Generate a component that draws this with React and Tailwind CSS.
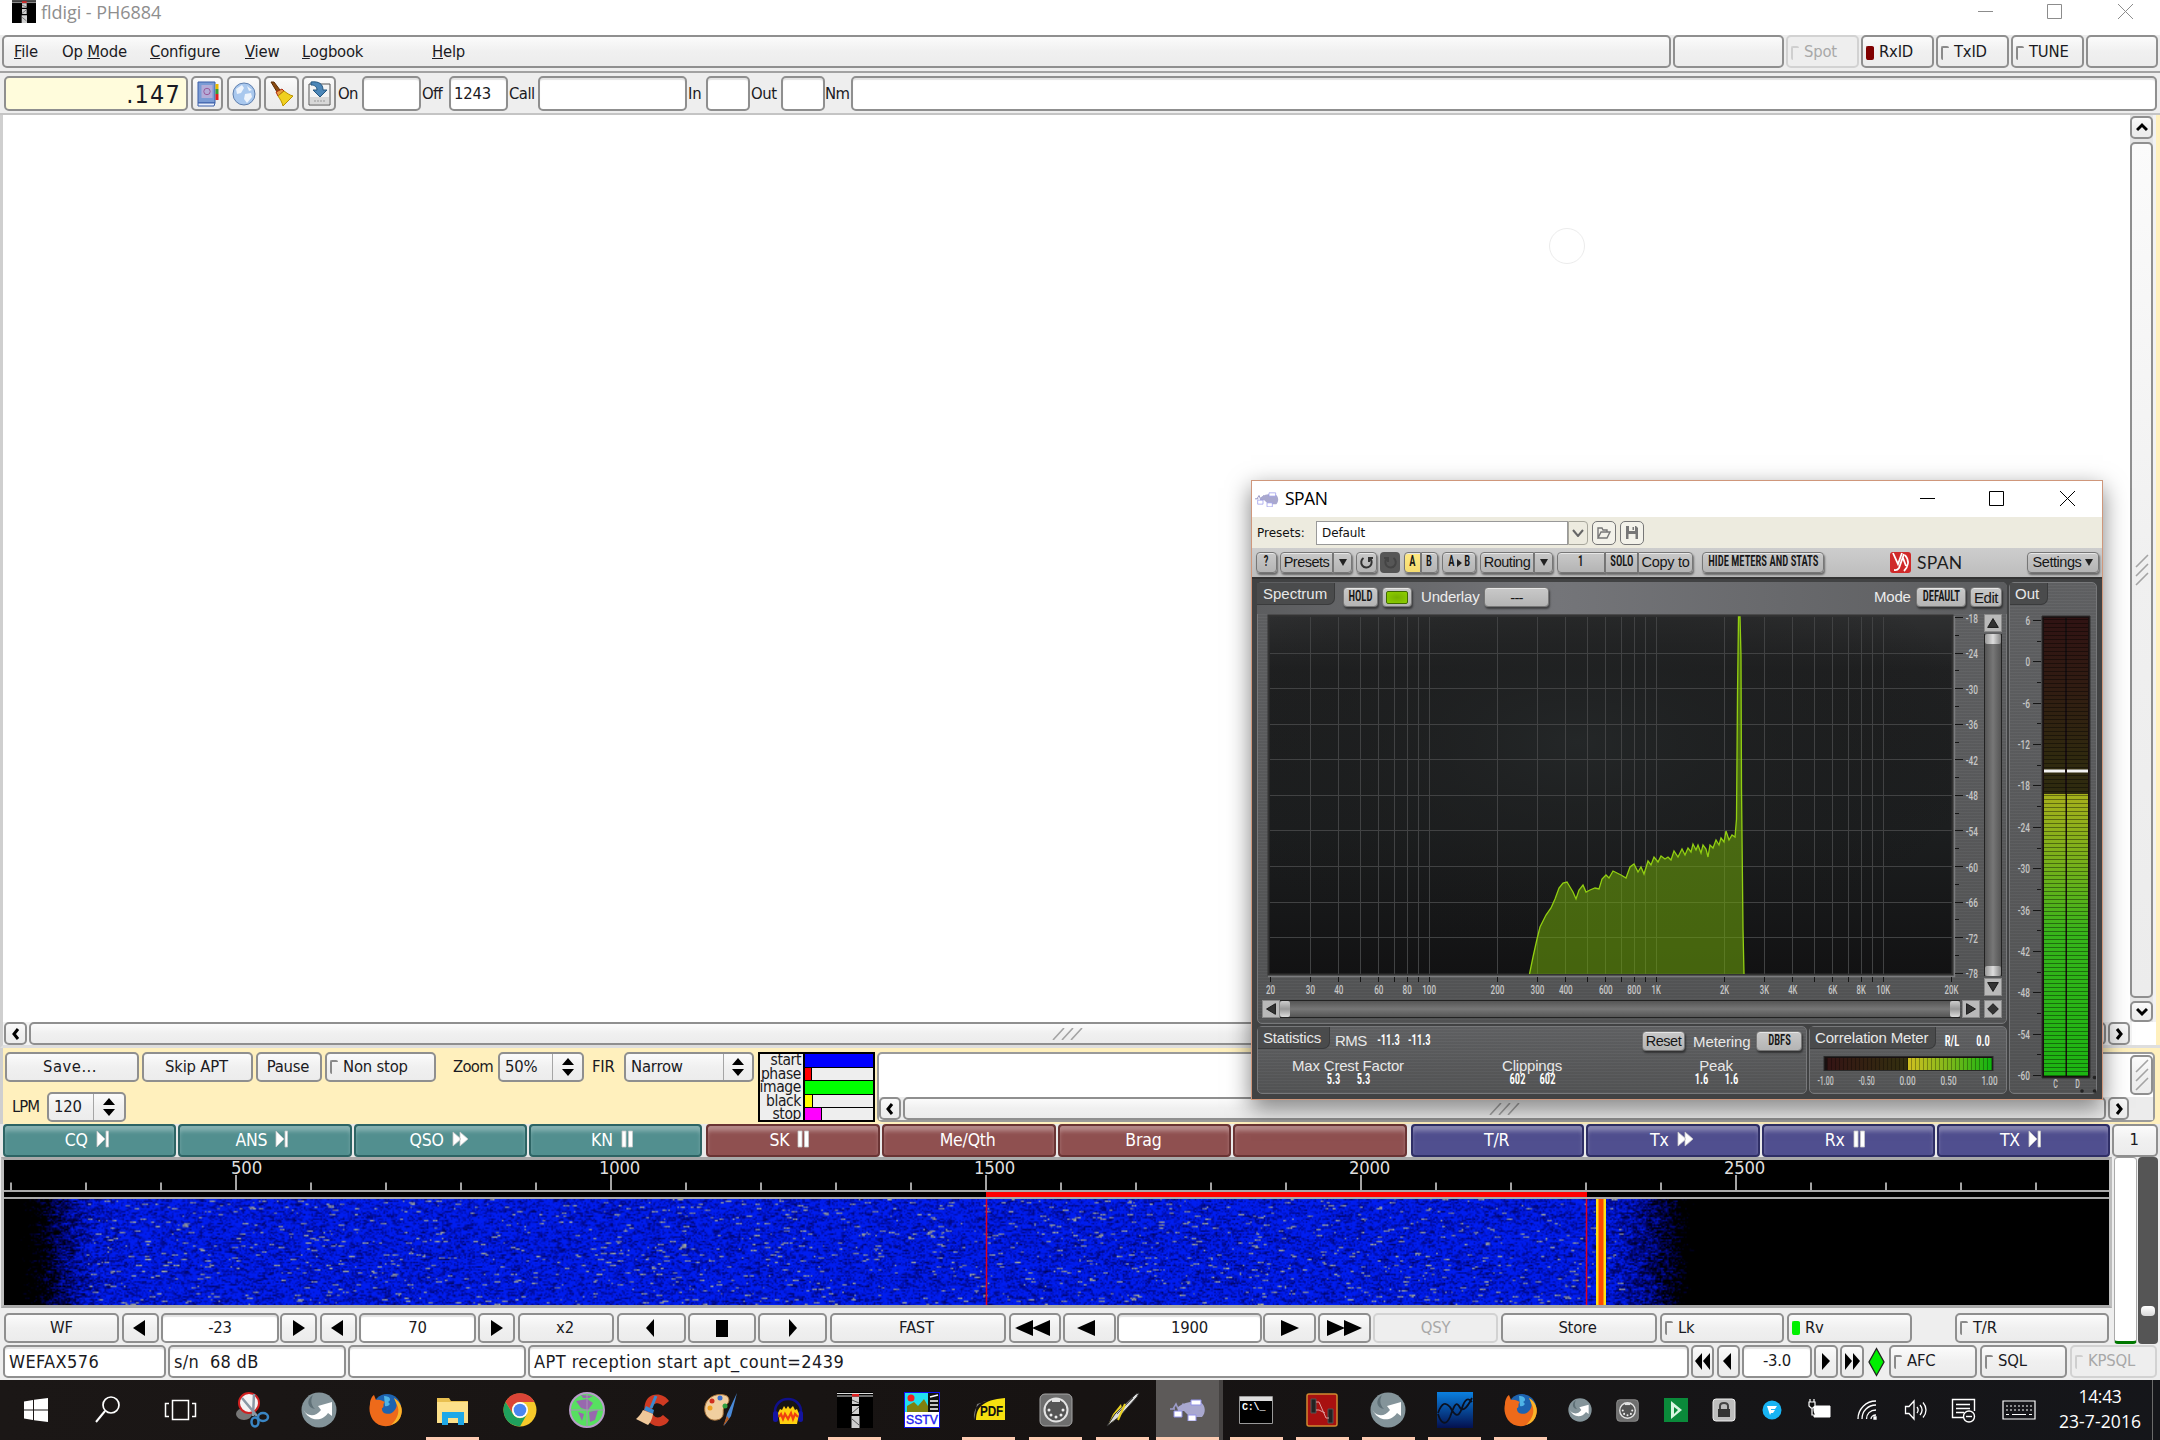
import React, { useEffect, useRef } from "react";

/* ---------- shared widgets ---------- */

const frame = "flex shrink-0 items-center whitespace-nowrap rounded-[5px] border-2 border-[#8f8f8f]";

function Btn({ className = "", children }) {
  return (
    <div className={`${frame} justify-center bg-linear-to-b from-[#fbfbfb] via-[#f0f0f0] to-[#ececec] ${className}`}>
      {children}
    </div>
  );
}

function Field({ className = "", children }) {
  return <div className={`${frame} bg-white shadow-[inset_0_2px_1px_#e4e4e4] ${className}`}>{children}</div>;
}

function Dim({ className = "", children }) {
  return (
    <div className={`flex shrink-0 items-center whitespace-nowrap rounded-[5px] border-2 border-[#d2d2d2] bg-[#eeeeee] text-[#a8a8a8] ${className}`}>
      {children}
    </div>
  );
}

function Mark({ className = "border-[#8a8a8a]" }) {
  return <span className={`mr-[5px] ml-[3px] h-[14px] w-[8px] shrink-0 rounded-[2px] border-t-2 border-l-2 ${className}`} />;
}

function Tri({ d, w = 12, h = 17, className = "" }) {
  return (
    <svg width={w} height={h} viewBox={`0 0 ${w} ${h}`} className={className}>
      <path d={d} fill="#000" />
    </svg>
  );
}
const Left = () => <Tri d="M12 0V16L0 8Z" className="mr-[4px]" />;
const Right = () => <Tri d="M0 0V16L12 8Z" />;
const ThinLeft = () => <Tri w={8} h={18} d="M8 0V18L0 9Z" className="mr-[4px]" />;
const ThinRight = () => <Tri w={8} h={18} d="M0 0V18L8 9Z" />;

function Choice({ className, inner, children }) {
  return (
    <Btn className={`${className} justify-start!`}>
      <span className={`flex h-full items-center border-r border-[#a5a5a5] pl-[5px] ${inner}`}>{children}</span>
      <svg viewBox="0 0 12 18" className="mx-auto h-[18px] w-[12px]">
        <path d="M0 7L6 0L12 7ZM0 11L6 18L12 11Z" fill="#000" />
      </svg>
    </Btn>
  );
}

function Grip({ className = "" }) {
  return (
    <svg width="32" height="12" viewBox="0 0 32 12" className={className}>
      <path d="M1 12L12 0M10 12L21 0M19 12L30 0" stroke="#a4a4a4" strokeWidth="1.6" />
    </svg>
  );
}

function VGrip() {
  return (
    <svg width="14" height="32" viewBox="0 0 14 32">
      <path d="M1 13L13 1M1 22L13 10M1 31L13 19" stroke="#a4a4a4" strokeWidth="1.6" />
    </svg>
  );
}

function Arrow({ dir }) {
  const d = {
    up: "M1 8L6 3L11 8",
    down: "M1 3L6 8L11 3",
    left: "M8 1L4 6L8 11",
    right: "M4 1L8 6L4 11",
  }[dir];
  return (
    <svg width="12" height="12" viewBox="0 0 12 12">
      <path d={d} fill="none" stroke="#000" strokeWidth="3" />
    </svg>
  );
}

/* ---------- main window ---------- */

function TowerIcon({ className }) {
  return (
    <svg viewBox="0 0 36 36" preserveAspectRatio="none" className={className}>
      <path fill="#000" d="M0 0H36V36H0Z" />
      <path stroke="#ddd" strokeWidth="1" d="M0 1.5H36M0 4H36" />
      <path fill="#e02020" d="M15 2H22V4.500H15Z" />
      <path fill="#cfcfcf" d="M15 5H22V12H15ZM15 14H22V22H15ZM14.500 24H22.500V36H14.500Z" />
      <path stroke="#555" d="M15 8L22 11M22 15L15 21M15 27L22 33" />
    </svg>
  );
}

function TitleBar() {
  return (
    <div className="flex h-[35px] items-start bg-white">
      <TowerIcon className="ml-[12px] h-[23px] w-[24px]" />
      <div className="ml-[5px] font-['Open_Sans'] text-[18px] leading-[25px] tracking-[-0.050px] text-[#8e8e8e] [font-stretch:normal]">fldigi - PH6884</div>
      <svg width="155" height="20" viewBox="0 0 155 20" className="mt-[1px] mr-[27px] ml-auto" fill="none" stroke="#8c8c8c">
        <path d="M0 10.500H15M69.500 3.500H83.500V17.500H69.500ZM140 3L155 18M155 3L140 18" />
      </svg>
    </div>
  );
}

function MenuRow() {
  return (
    <div className="flex h-[33px] gap-[2px] bg-[#eeeeee] pl-[2px] *:pt-[2px]">
      <Btn className="w-[1669px] justify-start! pl-[10px]">
        <div className="w-[48px]"><u>F</u>ile</div>
        <div className="w-[88px]">Op <u>M</u>ode</div>
        <div className="w-[95px]"><u>C</u>onfigure</div>
        <div className="w-[57px]"><u>V</u>iew</div>
        <div className="w-[130px]"><u>L</u>ogbook</div>
        <div><u>H</u>elp</div>
      </Btn>
      <Btn className="w-[111px]" />
      <Dim className="w-[73px]"><Mark className="border-[#cfcfcf]" />Spot</Dim>
      <Btn className="w-[73px] justify-start!"><Mark className="border-[#800000] bg-[#800000]" />RxID</Btn>
      <Btn className="w-[73px] justify-start!"><Mark />TxID</Btn>
      <Btn className="w-[73px] justify-start!"><Mark />TUNE</Btn>
      <Btn className="w-[72px]" />
    </div>
  );
}

function LogRow() {
  return (
    <div className="flex h-[35px] items-center bg-[#eeeeee] pl-[4px]">
      <div className={`${frame} h-full w-[184px] justify-end bg-[#fffcdc] pt-[2px] pr-[5px] text-[25px] tracking-[1.200px]`}>.147</div>
      <Btn className="ml-[3px] h-full w-[32px]">
        <svg width="24" height="26" viewBox="0 0 24 26">
          <path d="M3 1H20V22H3Z" fill="#7a9bd4" stroke="#3b5fa8" />
          <path d="M3 22H20L19 25H3Z" fill="#e8eefc" stroke="#3b5fa8" />
          <rect x="6.500" y="4" width="11" height="13" fill="#b3acd8" />
          <circle cx="12" cy="10.500" r="3.200" fill="none" stroke="#9a5a9a" />
          <path d="M20.500 3h3v5h-3z" fill="#e8b800" /><path d="M20.500 8h3v5h-3z" fill="#3aa030" /><path d="M20.500 13h3v6h-3z" fill="#e02020" />
        </svg>
      </Btn>
      <Btn className="ml-[4px] h-full w-[34px]">
        <svg width="24" height="24" viewBox="0 0 24 24">
          <circle cx="12" cy="12" r="11" fill="#a9c8ee" stroke="#5f7fae" />
          <path d="M4 7L10 3L12 6L9 11L5 12ZM13 12L19 11L20 15L15 21L12 17ZM15 4L20 8L17 9Z" fill="#eef4fc" />
        </svg>
      </Btn>
      <Btn className="ml-[3px] h-full w-[35px]">
        <svg width="25" height="26" viewBox="0 0 25 26">
          <path d="M2 1L5 1L11 9L8 11Z" fill="#8a4a10" stroke="#5b2e06" />
          <path d="M7 11L13 8L15 10L9 15Z" fill="#e8a040" stroke="#b02a10" />
          <path d="M9 15L15 10C18 12 20 14 24 15L14 25C13 21 11 18 9 15Z" fill="#f0d020" stroke="#b89000" />
        </svg>
      </Btn>
      <Btn className="mr-[2px] ml-[3px] h-full w-[34px]">
        <svg width="25" height="26" viewBox="0 0 25 26">
          <path d="M2 3H23V24H2Z" fill="#f4f4f4" stroke="#555" />
          <path d="M3 16H22V23H3Z" fill="#d8d8d8" /><path d="M7 20H19" stroke="#999" strokeDasharray="2 1" />
          <path d="M4 1C12 0 16 3 16 9H20L13 16L6 9H10C10 6 8 4 4 4Z" fill="#4b86b8" stroke="#24567f" />
        </svg>
      </Btn>
      <span className="w-[24px] pt-[2px] tracking-[-0.700px]">On</span>
      <Field className="h-full w-[59px]" />
      <span className="w-[28px] pt-[2px] pl-[1px] tracking-[-0.700px]">Off</span>
      <Field className="h-full w-[59px] pt-[2px] pl-[3px]">1243</Field>
      <span className="w-[30px] pt-[2px] pl-[1px] tracking-[-0.500px]">Call</span>
      <Field className="h-full w-[149px]" />
      <span className="w-[19px] pt-[2px] pl-[1px]">In</span>
      <Field className="h-full w-[44px]" />
      <span className="w-[31px] pt-[2px] pl-[1px] tracking-[-0.400px]">Out</span>
      <Field className="h-full w-[44px]" />
      <span className="w-[26px] pt-[2px] tracking-[-0.700px]">Nm</span>
      <Field className="h-full w-[1306px]" />
    </div>
  );
}

function RxArea() {
  return (
    <>
      <div className="flex h-[907px] border-l-[3px] border-[#cfcfcf] bg-white">
        <div className="flex-1" />
        <div className="flex w-[23px] flex-col gap-[3px] bg-[#e6e6e6] pt-px">
          <Btn className="h-[23px]"><Arrow dir="up" /></Btn>
          <Btn className="h-[856px]"><VGrip /></Btn>
          <Btn className="h-[21px]"><Arrow dir="down" /></Btn>
        </div>
        <div className="w-[7px] border-r-4 border-[#fff0bd] bg-[#f2f2f2]" />
      </div>
      <div className="flex h-[26px] items-start gap-[2px] border-b-[3px] border-l-[3px] border-b-[#dedede] border-l-[#cfcfcf] bg-[#f3f3f3] pl-[1px]">
        <Btn className="h-[23px] w-[23px]"><Arrow dir="left" /></Btn>
        <Btn className="h-[23px] w-[2077px]"><Grip /></Btn>
        <Btn className="h-[23px] w-[22px]"><Arrow dir="right" /></Btn>
        <div className="h-full flex-1 border-r-4 border-[#fff0bd] bg-white" />
      </div>
    </>
  );
}

const WEFAX_STATES = [
  ["start", "w-full bg-[#0000ff]"],
  ["phase", "w-[7px] border-r border-black bg-[#ff0000]"],
  ["image", "w-full bg-[#00ff00]"],
  ["black", "w-[8px] border-r border-black bg-[#ffff00]"],
  ["stop", "w-[17px] border-r border-black bg-[#ff00ff]"],
];

function WefaxPanel() {
  return (
    <div className="flex h-[76px] border-l-[3px] border-[#cfcfcf] bg-[#fff0bd] pt-[4px] pr-[5px]">
      <div className="flex w-[755px] flex-col gap-[10px] pl-[2px]">
        <div className="flex h-[30px] items-center">
          <Btn className="h-full w-[134px] pr-[4px] tracking-[0.500px]">Save...</Btn>
          <Btn className="ml-[3px] h-full w-[111px] pr-[2px]">Skip APT</Btn>
          <Btn className="ml-[3px] h-full w-[66px] pr-[2px] tracking-[-0.200px]">Pause</Btn>
          <Btn className="ml-[3px] h-full w-[111px] justify-start!"><Mark />Non stop</Btn>
          <span className="ml-[17px] w-[45px] tracking-[-0.700px]">Zoom</span>
          <Choice className="h-full w-[86px]" inner="w-[53px]">50%</Choice>
          <span className="ml-[8px] w-[32px]">FIR</span>
          <Choice className="h-full w-[130px]" inner="w-[98px]">Narrow</Choice>
        </div>
        <div className="flex h-[30px] items-center pl-[7px]">
          <span className="w-[35px] tracking-[-1px]">LPM</span>
          <Choice className="h-full w-[79px]" inner="w-[45px]">120</Choice>
        </div>
      </div>
      <div className="flex h-[70px] w-[117px] flex-col overflow-hidden border-2 border-black bg-[#eeeeee]">
        {WEFAX_STATES.map(([name, bar]) => (
          <div key={name} className="flex h-[13.500px] shrink-0">
            <div className="flex h-full w-[43px] items-center justify-end pr-[2px] text-[15.500px] leading-[13px] tracking-[-0.400px]">{name}</div>
            <div className="h-full flex-1 border-b border-l-2 border-black"><div className={`h-full ${bar}`} /></div>
          </div>
        ))}
      </div>
      <div className="ml-[2px] flex h-[70px] flex-1 flex-col justify-between rounded-[5px] border-2 border-[#9a9a9a] bg-white">
        <div className="flex h-[43px] justify-end">
          <Btn className="mt-px h-[40px] w-[23px]"><VGrip /></Btn>
        </div>
        <div className="flex h-[23px] gap-[2px] bg-[#ececec]">
          <Btn className="w-[22px]"><Arrow dir="left" /></Btn>
          <Btn className="w-[1203px]"><Grip /></Btn>
          <Btn className="w-[21px]"><Arrow dir="right" /></Btn>
        </div>
      </div>
    </div>
  );
}

const SYM = {
  next: "M1 1L9 9L1 17ZM10 1H12.500V17H10Z",
  ff: "M1 2L9 9L1 16ZM8 2L16 9L8 16Z",
  pause: "M1 1H5V17H1ZM7.500 1H11.500V17H7.500Z",
};
const TEAL = "border-[#2d6464] bg-[#528f8f] shadow-[inset_0_6px_4px_-1px_#86b1b1]";
const ROSE = "border-[#6a3434] bg-[#8f5050] shadow-[inset_0_6px_4px_-1px_#b58888]";
const BLUE = "border-[#2f2f66] bg-[#504f8f] shadow-[inset_0_6px_4px_-1px_#8786b3]";
const MACROS = [
  ["w-[699px]", TEAL, [["CQ", "next"], ["ANS", "next"], ["QSO", "ff"], ["KN", "pause"]]],
  ["w-[701px]", ROSE, [["SK", "pause"], ["Me/Qth"], ["Brag"], [""]]],
  ["w-[699px]", BLUE, [["T/R"], ["Tx", "ff"], ["Rx", "pause"], ["TX", "next"]]],
];

function MacroBar() {
  return (
    <div className="flex h-[33px] gap-[4px] bg-[#e9e9e9] pl-[3px]">
      {MACROS.map(([width, tone, items], g) => (
        <div key={g} className={`grid grid-cols-4 gap-[2px] ${width}`}>
          {items.map(([label, sym], i) => (
            <div key={i} className={`flex items-center justify-center gap-[8px] rounded-[4px] border-2 pr-[2px] text-[17.500px] text-white ${tone}`}>
              {label}
              {sym && (
                <svg width="17" height="18" viewBox="0 0 17 18" className="-mt-[4px]">
                  <path d={SYM[sym]} fill="#fff" stroke="#c8c8c8" strokeWidth="0.800" />
                </svg>
              )}
            </div>
          ))}
        </div>
      ))}
      <Btn className="-ml-[2px] w-[46px] pr-[2px]">1</Btn>
    </div>
  );
}

function Waterfall() {
  const ref = useRef(null);
  useEffect(() => {
    const c = ref.current;
    const W = c.width;
    const H = c.height;
    const ctx = c.getContext("2d");
    const img = ctx.createImageData(W, H);
    let seed = 20160723;
    const rnd = () => {
      seed = (Math.imul(seed, 1664525) + 1013904223) >>> 0;
      return seed / 4294967296;
    };
    const stops = [[0, -0.75], [14, -0.3], [24, -0.05], [38, 0.4], [56, 0.78], [80, 0.92], [1060, 0.92], [1080, 0.72], [1100, 0.42], [1112, 0.1], [1130, -0.5], [1405, -5]];
    const level = (x) => {
      for (let i = 1; i < stops.length; i++) {
        if (x <= stops[i][0]) {
          const [x0, a] = stops[i - 1];
          const [x1, b] = stops[i];
          return a + ((b - a) * (x - x0)) / (x1 - x0);
        }
      }
      return -5;
    };
    for (let y = 0; y < H; y++) {
      let prev = rnd();
      let speck = 0;
      for (let x = 0; x < W; x++) {
        const n = rnd();
        const mix = n * 0.6 + prev * 0.4;
        prev = mix;
        const base = level(x);
        let L = base + (mix - 0.5) * 1.15;
        if (speck > 0) speck--;
        else if (base > 0.74 && rnd() < 0.018) speck = 1 + Math.floor(rnd() * 4);
        L = Math.max(0, Math.min(1, L));
        const p = (y * W + x) * 4;
        if (speck > 0) {
          const s = 80 + rnd() * 80;
          img.data[p] = s;
          img.data[p + 1] = s + 8;
          img.data[p + 2] = 160;
        } else {
          img.data[p] = 0;
          img.data[p + 1] = L * L * 30;
          img.data[p + 2] = L * 240;
        }
        img.data[p + 3] = 255;
      }
    }
    ctx.putImageData(img, 0, 0);
  }, []);
  return <canvas ref={ref} width={1405} height={71} className="block h-[106px] w-[2107px] max-w-none" />;
}

function WaterfallScale() {
  const ticks = [];
  for (let hz = 200; hz <= 3000; hz += 100) ticks.push(hz);
  return (
    <svg width="2107" height="30" viewBox="4 1160 2107 30" className="block max-w-none bg-black">
      {ticks.map((hz) => {
        const x = 236 + (hz - 500) * 0.75;
        const major = hz % 500 === 0;
        return (
          <g key={hz}>
            <path d={`M${x} ${major ? 1175 : 1182.5}V1190`} stroke="#dcdcdc" strokeWidth="1.500" />
            {major && hz < 3000 && (
              <text x={x - (hz < 1000 ? 5 : 12)} y="1174" fill="#dedede" fontSize="17" textLength={hz < 1000 ? 31 : 41} lengthAdjust="spacingAndGlyphs">{hz}</text>
            )}
          </g>
        );
      })}
    </svg>
  );
}

function WaterfallBlock() {
  return (
    <div className="flex h-[187px] bg-[#eeeeee]">
      <div className="w-[2112px]">
        <div className="ml-px h-[151px] w-[2111px] overflow-hidden border-x-[3px] border-t-[3px] border-b-[3px] border-x-[#bdbdbd] border-y-[#a9a9a9]">
          <WaterfallScale />
          <div className="flex h-[9px] border-y-2 border-[#a9a9a9] bg-black pl-[982px]">
            <div className="w-[601px] bg-[#ff0000]" />
          </div>
          <div className="relative w-[2107px]">
            <Waterfall />
            <svg className="absolute inset-0 h-[106px] w-[2107px]" viewBox="4 0 2107 106">
              <path d="M986.500 0V106M1586.500 0V106" stroke="#e00020" strokeWidth="1.500" />
              <path d="M1596 0H1606V106H1596Z" fill="#ffe010" />
              <path d="M1598.500 0H1603.500V106H1598.500Z" fill="#ff4a00" />
            </svg>
          </div>
        </div>
        <div className="flex h-[36px] items-start pt-[5px] pl-[4px] *:h-[30px]">
          <Btn className="w-[115px]">WF</Btn>
          <Btn className="ml-[3px] w-[37px]"><Left /></Btn>
          <Field className="ml-[2px] w-[118px] justify-center">-23</Field>
          <Btn className="ml-[1px] w-[37px]"><Right /></Btn>
          <Btn className="ml-[3px] w-[37px]"><Left /></Btn>
          <Field className="ml-[2px] w-[117px] justify-center">70</Field>
          <Btn className="ml-[2px] w-[37px]"><Right /></Btn>
          <Btn className="ml-[3px] w-[96px] pr-[2px]">x2</Btn>
          <Btn className="ml-[3px] w-[69px]"><ThinLeft /></Btn>
          <Btn className="ml-[2px] w-[68px]"><Tri d="M0 0H12V17H0Z" /></Btn>
          <Btn className="ml-[2px] w-[69px]"><ThinRight /></Btn>
          <Btn className="ml-[3px] w-[176px] pr-[3px]">FAST</Btn>
          <Btn className="ml-[3px] w-[52px] pr-[6px]"><Tri w={35} d="M18 0V16L0 8ZM35 0V16L17 8Z" /></Btn>
          <Btn className="ml-[2px] w-[53px] pr-[8px]"><Tri w={18} d="M18 0V16L0 8Z" /></Btn>
          <Field className="ml-[1px] w-[145px] justify-center">1900</Field>
          <Btn className="ml-[1px] w-[53px]"><Tri w={18} d="M0 0V16L18 8Z" /></Btn>
          <Btn className="ml-[2px] w-[53px]"><Tri w={35} d="M0 0V16L18 8ZM17 0V16L35 8Z" /></Btn>
          <Dim className="ml-[2px] w-[125px] justify-center">QSY</Dim>
          <Btn className="ml-[3px] w-[156px] pr-[3px]">Store</Btn>
          <Btn className="ml-[3px] w-[124px] justify-start!"><Mark />Lk</Btn>
          <Btn className="ml-[3px] w-[125px] justify-start!"><Mark className="border-[#00f000] bg-[#00f000]" />Rv</Btn>
          <Btn className="ml-[43px] w-[154px] justify-start!"><Mark />T/R</Btn>
        </div>
      </div>
      <div className="ml-[2px] w-[23px] rounded-[4px] border border-x-[#aaa] border-t-[#999] border-b-[3px] border-b-[#007800] bg-white" />
      <div className="ml-[1px] flex w-[20px] flex-col rounded-[4px] bg-[#555] px-[3px] pt-[149px]">
        <div className="h-[10px] rounded-[4px] bg-linear-to-b from-white to-[#d8d8d8]" />
      </div>
    </div>
  );
}

function StatusRow() {
  return (
    <div className="flex h-[36px] items-start bg-[#eeeeee] pt-px pb-[2px] pl-[3px] *:h-[33px]">
      <Field className="w-[163px] pl-[4px] text-[18px] tracking-[0.400px]">WEFAX576</Field>
      <Field className="ml-[2px] w-[178px] pl-[4px] text-[18px] tracking-[0.300px] whitespace-pre">{"s/n  68 dB"}</Field>
      <Field className="ml-[2px] w-[178px]" />
      <Field className="ml-[2px] w-[1161px] pl-[4px] text-[18px] tracking-[0.440px]">APT reception start apt_count=2439</Field>
      <Btn className="ml-[2px] w-[23px]"><Tri w={15} d="M7 0V17L0 8ZM15 0V17L8 8Z" /></Btn>
      <Btn className="ml-[3px] w-[23px] pr-[3px]"><Tri w={8} d="M8 0V17L0 8Z" /></Btn>
      <Field className="ml-[2px] w-[70px] justify-center">-3.0</Field>
      <Btn className="ml-[2px] w-[24px]"><Tri w={8} d="M0 0V17L8 8Z" /></Btn>
      <Btn className="ml-[2px] w-[24px]"><Tri w={15} d="M0 0V17L7 8ZM8 0V17L15 8Z" /></Btn>
      <svg viewBox="0 0 17 33" className="ml-[4px] w-[17px]">
        <path d="M8.500 3.500L16 17L8.500 30.500L1 17Z" fill="#00ef00" stroke="#222" strokeWidth="1.300" />
      </svg>
      <Btn className="ml-[4px] w-[88px] justify-start!"><Mark />AFC</Btn>
      <Btn className="ml-[3px] w-[87px] justify-start!"><Mark />SQL</Btn>
      <Dim className="ml-[3px] w-[87px]"><Mark className="border-[#cfcfcf]" />KPSQL</Dim>
    </div>
  );
}

/* ---------- SPAN plugin window ---------- */

const plug = "flex shrink-0 items-center justify-center whitespace-nowrap rounded-[4px] border border-[#777] bg-linear-to-b from-[#c9c9c9] to-[#b4b4b4] text-[#161616] shadow-[1px_2px_2px_rgba(0,0,0,0.45),inset_0_1px_0_#e6e6e6]";
const Plug = ({ className = "", children }) => <div className={`${plug} ${className}`}>{children}</div>;
const Nar = ({ className = "", children }) => (
  <span className={`inline-block scale-x-[.73] font-['Roboto'] text-[14.500px] leading-none font-semibold whitespace-nowrap [font-stretch:condensed] ${className}`}>{children}</span>
);
const Caret = () => <svg width="8" height="7" viewBox="0 0 8 7"><path d="M0 0H8L4 7Z" fill="#222" /></svg>;

const panel = "rounded-[5px] border border-[#77787a] bg-[repeating-linear-gradient(0deg,rgba(255,255,255,0.02)_0_1px,rgba(0,0,0,0.04)_1px_3px),linear-gradient(180deg,#626365,#545556)]";
const tab = "flex h-[22px] shrink-0 items-center rounded-br-[7px] border-r border-b border-[#3a3b3c] bg-[#4a4b4c] text-[15px] text-[#e8e8e8]";

function SpanIcon({ className }) {
  return (
    <svg viewBox="0 0 36 22" className={className}>
      <path d="M0 10H5M3 10L6 5L9 12L13 5L17 10" stroke="#9a9ac8" strokeWidth="1.500" fill="none" />
      <path d="M8 8C14 3 22 2 30 3C36 6 36 14 32 18H20L14 12H8Z" fill="#a9a8cf" />
      <path d="M21 1H31V6H21ZM4 12H12V18H4ZM18 16H26V22H18Z" fill="#fff" stroke="#9090e8" />
    </svg>
  );
}

const DB = [-18, -24, -30, -36, -42, -48, -54, -60, -66, -72, -78];
const HZ = [20, 30, 40, 50, 60, 70, 80, 90, 100, 200, 300, 400, 500, 600, 700, 800, 900, 1000, 2000, 3000, 4000, 5000, 6000, 7000, 8000, 9000, 10000, 20000];
const HZ_LABEL = /^(20|30|40|60|80|100|200|300|400|600|800|1000|2000|3000|4000|6000|8000|10000|20000)$/;
const hx = (f) => 1270.5 + 227 * Math.log10(f / 20);
const dy = (d) => 618.5 + (-18 - d) * 5.93;

function AxisText({ x, y, s, anchor = "middle", fill = "#c6c6c6", k = 4.6 }) {
  return (
    <text x={x} y={y} fill={fill} fontSize="12.500" fontWeight="500" fontFamily="Roboto" textAnchor={anchor} textLength={String(s).replace(/[.-]/g, "").length * k + (/[.-]/.test(s) ? 3 : 0)} lengthAdjust="spacingAndGlyphs">
      {s}
    </text>
  );
}

const CURVE =
  "M1529.500 975L1533 958L1537 940L1540 928L1546 916L1551 909L1555 900L1559 889L1563 884L1567 883L1570 888L1573 893L1576 900L1579 891L1583 886L1586 893L1590 891L1595 889L1599 890L1602 880L1606 876L1609 879L1613 872L1617 874L1621 876L1626 879L1630 868L1634 865L1638 873L1641 868L1644 875L1648 862L1651 866L1654 858L1658 863L1661 857L1665 860L1668 858L1671 861L1674 852L1678 858L1682 850L1685 856L1688 849L1691 853L1693 845L1696 851L1698 846L1701 854L1703 846L1706 850L1708 858L1710 846L1713 849L1716 841L1719 846L1721 839L1724 843L1726 832L1729 841L1732 836L1735 838L1736.500 820L1737.500 695L1738.500 618L1740 618L1741 657L1741.500 790L1743 930L1744 975";

function Spectrum() {
  return (
    <svg width="725" height="384" viewBox="1257 615 725 384" className="block overflow-visible">
      <defs>
        <linearGradient id="plotbg" x1="0" x2="0" y1="0" y2="1">
          <stop offset="0" stopColor="#2f3031" /><stop offset="0.150" stopColor="#202122" /><stop offset="0.600" stopColor="#1c1e1f" /><stop offset="1" stopColor="#121213" />
        </linearGradient>
        <radialGradient id="plotglow" cx="0.450" cy="0.350" r="0.600">
          <stop offset="0" stopColor="#242728" /><stop offset="1" stopColor="#161616" stopOpacity="0" />
        </radialGradient>
      </defs>
      <path d="M1268.500 616.500H1952.500V975.500H1268.500Z" fill="url(#plotbg)" stroke="#333" strokeWidth="2" />
      <path d="M1270 618H1952V975H1270Z" fill="url(#plotglow)" />
      <path d="M1268 977.500H1954.500V617" fill="none" stroke="#7b7c7e" strokeWidth="1.500" />
      {HZ.slice(1, -1).map((f) => <path key={f} d={`M${Math.floor(hx(f)) + 0.5} 618V975`} stroke="#414243" />)}
      {DB.slice(1, -1).map((d) => <path key={d} d={`M1270 ${Math.floor(dy(d)) + 0.5}H1952`} stroke="#414243" />)}
      <path d={CURVE + "Z"} fill="#6fa80a" fillOpacity="0.550" />
      <path d={CURVE} fill="none" stroke="#92cf12" strokeWidth="1.300" />
      {HZ.map((f) => (
        <g key={f}>
          <path d={`M${Math.floor(hx(f)) + 0.5} 978V983`} stroke="#161616" />
          {HZ_LABEL.test(String(f)) && <AxisText x={hx(f)} y={995} s={f >= 1000 ? f / 1000 + "K" : f} />}
        </g>
      ))}
      {DB.map((d) => (
        <g key={d}>
          <path d={`M1955 ${Math.floor(dy(d)) + 0.5}H1963`} stroke="#161616" />
          {d > -78 && <path d={`M1955 ${Math.floor(dy(d - 3)) + 0.5}H1959`} stroke="#161616" />}
          <AxisText x={1978} y={dy(d) + 5} s={d} anchor="end" />
        </g>
      ))}
    </svg>
  );
}

function ScrollBtn({ d }) {
  return (
    <svg width="18" height="18" viewBox="0 0 18 18" className="shrink-0 border border-[#8a8a8a] bg-[#b9b9b9]">
      <path d={d} fill="#333" stroke="#111" />
    </svg>
  );
}

function OutMeter() {
  const my = (d) => 620 + (6 - d) * 6.894;
  const marks = [];
  for (let d = 6; d >= -60; d -= 3) marks.push(d);
  return (
    <svg width="86" height="488" viewBox="2010 605 86 488" className="block">
      <defs>
        <linearGradient id="off" x1="0" x2="0" y1="0" y2="1">
          <stop offset="0" stopColor="#301313" /><stop offset="0.150" stopColor="#311c12" /><stop offset="0.300" stopColor="#30290f" /><stop offset="0.600" stopColor="#2c300f" /><stop offset="1" stopColor="#2c300f" />
        </linearGradient>
        <linearGradient id="on" x1="0" x2="0" y1="0" y2="1">
          <stop offset="0" stopColor="#a6b01c" /><stop offset="0.250" stopColor="#76b01a" /><stop offset="0.500" stopColor="#36b41a" /><stop offset="1" stopColor="#1cb412" />
        </linearGradient>
        <pattern id="rows" width="46" height="4" patternUnits="userSpaceOnUse"><path d="M0 3.500H46" stroke="#000" strokeOpacity="0.400" /></pattern>
      </defs>
      <path d="M2042 616H2090V1078H2042Z" fill="#1a1010" stroke="#2e2e2e" />
      <path d="M2044 618H2065V1076H2044ZM2067 618H2088V1076H2067Z" fill="url(#off)" />
      <path d="M2044 794H2065.500V1076H2044ZM2067 794H2088V1076H2067Z" fill="url(#on)" />
      <path d="M2044 618H2088V1076H2044Z" fill="url(#rows)" />
      <path d="M2044 769.500H2065V772.500H2044ZM2067 769.500H2088V772.500H2067Z" fill="#f2f2f2" />
      {marks.map((d) => (
        <g key={d}>
          <path d={`M${d % 6 === 0 ? 2033 : 2037} ${Math.round(my(d)) + 0.5}H2041`} stroke="#161616" />
          {d % 6 === 0 && <AxisText x={2030} y={my(d) + 5} s={d} anchor="end" />}
        </g>
      ))}
      <AxisText x={2055.5} y={1088} s="C" /><AxisText x={2077.5} y={1088} s="D" />
      <circle cx="2094.500" cy="1077.500" r="1.800" fill="#222" /><circle cx="2082" cy="1091" r="1.800" fill="#222" /><circle cx="2094.500" cy="1091" r="1.800" fill="#222" />
    </svg>
  );
}

function SpanWindow() {
  return (
    <div className="absolute top-[480px] left-[1251px] flex h-[620px] w-[852px] flex-col border border-[#cf977b] bg-white font-['Liberation_Sans'] tracking-normal shadow-[0_8px_22px_rgba(0,0,0,0.5)] [font-stretch:normal]">
      <div className="flex h-[36px] shrink-0 items-center">
        <SpanIcon className="ml-[3px] h-[15px] w-[24px]" />
        <div className="ml-[6px] font-['Open_Sans'] text-[17.500px] tracking-[-0.500px] text-black">SPAN</div>
        <svg width="155" height="16" viewBox="0 0 155 16" className="mr-[27px] ml-auto" fill="none" stroke="#000">
          <path d="M0 7.500H15M69.500 0.500H83.500V14.500H69.500ZM140 0L155 15M155 0L140 15" />
        </svg>
      </div>
      <div className="flex h-[31px] shrink-0 items-center bg-[#edebdf] pl-[5px] font-['DejaVu_Sans'] text-[12px] text-[#111]">
        <span className="w-[59px]">Presets:</span>
        <div className="flex h-[24px] w-[252px] items-center border border-[#999] bg-white pl-[5px] tracking-[-0.100px]">Default</div>
        <div className="flex h-[24px] w-[20px] items-center justify-center rounded-r-[4px] border border-[#a8a79c] bg-[#edebdf]">
          <svg width="12" height="8" viewBox="0 0 12 8"><path d="M1 1L6 7L11 1" fill="none" stroke="#666" strokeWidth="2" /></svg>
        </div>
        <div className="ml-[4px] flex size-[24px] items-center justify-center rounded-[5px] border border-[#777] bg-[#f3f2ea]">
          <svg width="14" height="12" viewBox="0 0 14 12"><path d="M1 11V1H5L6 3H10V5M1 11L4 5H13L10 11Z" fill="none" stroke="#777" strokeWidth="1.400" /></svg>
        </div>
        <div className="ml-[4px] flex size-[24px] items-center justify-center rounded-[5px] border border-[#777] bg-[#f3f2ea]">
          <svg width="14" height="13" viewBox="0 0 14 13"><path d="M1 0H11L13 2V13H1Z" fill="#777" /><path d="M4 0H10V5H4ZM3.500 8H10.500V13H3.500Z" fill="#f3f2ea" /><path d="M7.500 1H9V4H7.500Z" fill="#777" /></svg>
        </div>
      </div>
      <div className="flex h-[29px] shrink-0 items-center bg-linear-to-b from-[#cdcdcd] to-[#bdbdbd] pl-[4px] text-[14.500px] *:h-[21px]">
        <Plug className="w-[21px]"><Nar className="scale-x-90">?</Nar></Plug>
        <Plug className="ml-[3px] w-[53px] rounded-r-none tracking-[-0.500px]">Presets</Plug>
        <Plug className="w-[19px] rounded-l-none"><Caret /></Plug>
        <Plug className="ml-[4px] w-[21px]">
          <svg width="15" height="14" viewBox="0 0 15 14"><path d="M4.500 2A5.200 5.200 0 1 0 11 2.500M10 6V2H14" fill="none" stroke="#333" strokeWidth="2" /></svg>
        </Plug>
        <div className="ml-[3px] flex w-[20px] items-center justify-center rounded-[4px] bg-[#565656]">
          <svg width="15" height="14" viewBox="0 0 15 14"><path d="M10.500 2A5.200 5.200 0 1 1 4 2.500M5 6V2H1" fill="none" stroke="#444" strokeWidth="2" /></svg>
        </div>
        <Plug className="ml-[4px] w-[17px] rounded-r-none from-[#ffe984]! to-[#f5dc70]!"><Nar>A</Nar></Plug>
        <Plug className="w-[17px] rounded-l-none"><Nar>B</Nar></Plug>
        <Plug className="ml-[4px] w-[34px] gap-[1px]">
          <Nar className="w-[9px]">A</Nar><svg width="5" height="8" viewBox="0 0 5 8"><path d="M0 0L5 4L0 8Z" fill="#222" /></svg><Nar className="w-[9px]">B</Nar>
        </Plug>
        <Plug className="ml-[4px] w-[54px] rounded-r-none tracking-[-0.500px]">Routing</Plug>
        <Plug className="w-[19px] rounded-l-none"><Caret /></Plug>
        <Plug className="ml-[4px] w-[48px] rounded-r-none"><Nar className="scale-x-90">1</Nar></Plug>
        <Plug className="w-[33px] rounded-none"><Nar>SOLO</Nar></Plug>
        <Plug className="w-[55px] rounded-l-none tracking-[-0.300px]">Copy to</Plug>
        <Plug className="ml-[9px] w-[122px]"><Nar>HIDE METERS AND STATS</Nar></Plug>
        <svg viewBox="0 0 21 21" className="ml-[66px] w-[21px]">
          <rect width="21" height="21" rx="3" fill="#d02a2a" />
          <path d="M3 1L8 12L12 1M14 2L9 16C7 19 5 18 4 18M13 6L16 14M15 3C20 9 18 15 14 19" fill="none" stroke="#fff" strokeWidth="1.800" />
        </svg>
        <span className="ml-[6px] flex w-[110px] items-center font-['Lato'] text-[17.500px] tracking-[0.300px] text-[#1d1d1d]">SPAN</span>
        <Plug className="w-[72px] gap-[4px] tracking-[-0.450px]">Settings <Caret /></Plug>
      </div>

      <div className="flex flex-1 gap-[2px] border-t-2 border-[#333] bg-[#414243] pt-[3px] pl-[5px]">
        <div className="flex w-[750px] flex-col gap-[2px]">
          <div className={`${panel} flex h-[442px] flex-col`}>
            <div className="-m-px mb-0 flex h-[32px] shrink-0 items-start rounded-t-[5px] bg-linear-to-r from-[#5c5d5f] via-[#747579] via-40% to-[#5c5d5f] pt-px text-[15px] text-[#ececec]">
              <div className={`${tab} w-[78px] pl-[6px]`}>Spectrum</div>
              <Plug className="mt-[4px] ml-[8px] h-[20px] w-[35px]"><Nar>HOLD</Nar></Plug>
              <Plug className="mt-[4px] ml-[4px] h-[20px] w-[30px]"><span className="h-[13px] w-[22px] rounded-[2px] border border-[#3f6a00] bg-[radial-gradient(#76b000,#8ed000)]" /></Plug>
              <span className="mt-[5px] ml-[9px] w-[63px] leading-[18px] tracking-[-0.200px]">Underlay</span>
              <Plug className="mt-[4px] h-[20px] w-[65px] tracking-[-0.800px]">---</Plug>
              <span className="mt-[5px] ml-[325px] w-[42px] leading-[18px] tracking-[-0.200px]">Mode</span>
              <Plug className="mt-[4px] h-[20px] w-[50px]"><Nar>DEFAULT</Nar></Plug>
              <Plug className="mt-[4px] ml-[4px] h-[20px] w-[32px] tracking-[-0.500px]">Edit</Plug>
            </div>
            <div className="-ml-px flex">
              <Spectrum />
              <div className="ml-[2px] flex w-[18px] flex-col">
                <ScrollBtn d="M3 14L9 4L15 14Z" />
                <div className="my-[2px] flex h-[342px] flex-col justify-between border-x border-[#222] bg-linear-to-r from-[#555] via-[#777] to-[#555]">
                  <div className="h-[10px] rounded-[2px] bg-linear-to-r from-[#999] via-[#ddd] to-[#888]" />
                  <div className="h-[10px] rounded-[2px] bg-linear-to-r from-[#999] via-[#ddd] to-[#888]" />
                </div>
                <ScrollBtn d="M3 4L9 14L15 4Z" />
              </div>
            </div>
            <div className="mt-[2px] ml-[4px] flex">
              <ScrollBtn d="M14 3L4 9L14 15Z" />
              <div className="mr-[2px] flex h-[18px] w-[680px] justify-between border-y border-[#222] bg-linear-to-b from-[#555] via-[#777] to-[#555]">
                <div className="w-[10px] rounded-[2px] bg-linear-to-b from-[#ccc] via-[#999] to-[#ddd]" />
                <div className="w-[10px] rounded-[2px] bg-linear-to-b from-[#ccc] via-[#999] to-[#ddd]" />
              </div>
              <ScrollBtn d="M4 3L14 9L4 15Z" />
              <div className="w-[4px]" />
              <ScrollBtn d="M9 3L15 9L9 15L3 9Z" />
            </div>
          </div>

          <div className="flex h-[68px] gap-[2px] text-[15px] text-[#e8e8e8]">
            <div className={`${panel} w-[550px]`}>
              <div className="flex h-[30px]">
                <div className={`${tab} w-[72px] pl-[5px] tracking-[-0.200px]`}>Statistics</div>
                <span className="mt-[5px] ml-[5px] w-[36px] leading-[18px] tracking-[-0.500px]">RMS</span>
                <Nar className="mt-[7px] ml-[2px] w-[31px] text-center text-white">-11.3</Nar>
                <Nar className="mt-[7px] w-[30px] text-center text-white">-11.3</Nar>
                <Plug className="mt-[4px] ml-[208px] h-[20px] w-[43px] text-[14.500px] tracking-[-0.500px]">Reset</Plug>
                <span className="mt-[6px] ml-[8px] w-[63px] leading-[18px] tracking-[-0.100px]">Metering</span>
                <Plug className="mt-[4px] h-[20px] w-[46px]"><Nar>DBFS</Nar></Plug>
              </div>
              <div className="flex leading-[16px]">
                {[
                  ["Max Crest Factor", "5.3", "ml-[25px] w-[130px]"],
                  ["Clippings", "602", "ml-[54px] w-[130px]"],
                  ["Peak", "1.6", "ml-[54px] w-[130px]"],
                ].map(([t, v, c]) => (
                  <div key={t} className={`flex flex-col items-center ${c}`}>
                    <span className="leading-[17px] tracking-[-0.200px]">{t}</span>
                    <div className="-mt-[1px] flex gap-[5px] text-white"><Nar className="w-[25px] text-center">{v}</Nar><Nar className="w-[25px] text-center">{v}</Nar></div>
                  </div>
                ))}
              </div>
            </div>
            <div className={`${panel} w-[198px]`}>
              <div className="flex h-[29px]">
                <div className={`${tab} w-[126px] pl-[5px] tracking-[-0.150px]`}>Correlation Meter</div>
                <Nar className="mt-[8px] ml-[3px] w-[26px] text-center text-white">R/L</Nar>
                <Nar className="mt-[8px] ml-[5px] w-[26px] text-center text-white">0.0</Nar>
              </div>
              <svg width="196" height="36" viewBox="1810 1056 196 36" className="block">
                <defs>
                  <linearGradient id="c0"><stop offset="0" stopColor="#341414" /><stop offset="1" stopColor="#33300f" /></linearGradient>
                  <linearGradient id="c1"><stop offset="0" stopColor="#d0c020" /><stop offset="0.500" stopColor="#7cb81a" /><stop offset="1" stopColor="#10b410" /></linearGradient>
                  <pattern id="cols" width="4" height="14" patternUnits="userSpaceOnUse"><path d="M3.500 0V14" stroke="#000" strokeOpacity="0.300" /></pattern>
                </defs>
                <rect x="1824" y="1056.500" width="169" height="14" fill="#181010" stroke="#2a2a2a" />
                <rect x="1827" y="1058" width="81" height="12" fill="url(#c0)" />
                <rect x="1908" y="1058" width="84" height="12" fill="url(#c1)" />
                <rect x="1827" y="1058" width="165" height="12" fill="url(#cols)" />
                {["-1.00", "-0.50", "0.00", "0.50", "1.00"].map((s, i) => <AxisText key={s} x={1825.500 + i * 41} y={1085} s={s} k={4.4} />)}
              </svg>
            </div>
          </div>
        </div>
        <div className={`${panel} h-[512px] w-[88px]`}>
          <div className={`${tab} w-[38px] pl-[5px]`}>Out</div>
          <OutMeter />
        </div>
      </div>
    </div>
  );
}

/* ---------- taskbar ---------- */

const I = ({ children, className = "" }) => <svg width="36" height="36" viewBox="0 0 36 36" className={className}>{children}</svg>;

const Firefox = () => (
  <I>
    <circle cx="19" cy="16" r="14" fill="#1d63b0" />
    <path d="M16 4C22 4 24 8 20 10C24 12 20 15 17 14Z" fill="#4fb4e6" />
    <path d="M2 12C2 8 4 4 6 3L8 8C12 7 14 9 17 10C14 12 17 15 14 16C13 22 22 24 26 19C30 15 29 10 26 6C33 10 36 18 32 26C26 36 12 37 5 28C1 22 1 16 2 12Z" fill="#ee6a1a" />
    <path d="M26 6C33 10 36 18 32 26C30 30 26 32 23 33C30 27 32 18 29 13Z" fill="#f9b52a" />
  </I>
);
const Swirl = ({ s = 36 }) => (
  <svg width={s} height={s} viewBox="0 0 36 36">
    <circle cx="18" cy="18" r="17.500" fill="#84949a" />
    <path d="M2 17C5 24 14 26 20 18L17 14L31 10V24L27 21C21 30 8 30 2 17Z" fill="#fff" />
    <path d="M12 3C5 7 6 16 14 17C9 12 10 7 12 3Z" fill="#5f7077" />
  </svg>
);
const Din = ({ s = 34 }) => (
  <svg width={s} height={s} viewBox="0 0 34 34">
    <rect x="1" y="1" width="32" height="32" rx="5" fill="#6e6e6e" stroke="#a5a5a5" />
    <circle cx="17" cy="17" r="11.500" fill="#555" stroke="#e4e4e4" strokeWidth="2" />
    <path d="M13 6H21V9H13Z" fill="#e4e4e4" />
    <g fill="#eee"><circle cx="10" cy="17" r="1.500" /><circle cx="24" cy="17" r="1.500" /><circle cx="12" cy="22" r="1.500" /><circle cx="22" cy="22" r="1.500" /><circle cx="17" cy="24" r="1.500" /></g>
  </svg>
);

const TASKS = [
  ["start", false, <I><path d="M6 9.500L15 8V17.500H6ZM16 7.800L30 6V17.500H16ZM6 18.500H15V28L6 26.500ZM16 18.500H30V30L16 28.200Z" fill="#fff" /></I>],
  ["search", false, <I><circle cx="21" cy="13" r="8" fill="none" stroke="#fff" strokeWidth="1.700" /><path d="M15 19L6 30" stroke="#fff" strokeWidth="2" /></I>],
  ["view", false, <I><path d="M10.500 8.500H26.500V27.500H10.500ZM7 11.500H3.500V24.500H7M30 11.500H33.500V24.500H30" fill="none" stroke="#fff" strokeWidth="1.500" /></I>],
  ["snip", false, <I><ellipse cx="10" cy="22" rx="8" ry="6" fill="#777" /><circle cx="15" cy="11" r="10" fill="#f4f4f4" stroke="#d02020" strokeWidth="2" /><path d="M8 6L23 24M20 2L19 24" stroke="#8b98a4" strokeWidth="2.500" /><ellipse cx="29" cy="25" rx="5" ry="4" fill="none" stroke="#3a86c4" strokeWidth="2.500" /><ellipse cx="21" cy="30" rx="3.500" ry="4.500" fill="none" stroke="#3a86c4" strokeWidth="2.500" /></I>],
  ["swirl", false, <Swirl />],
  ["firefox", false, <Firefox />],
  ["files", true, <I><path d="M2 6H14L16 9H33V31H2Z" fill="#e8bf50" /><path d="M2 10H33V31H2Z" fill="#fce08a" /><path d="M7 20H29V33H23V26H13V33H7Z" fill="#1ea8e8" /></I>],
  ["chrome", false, <I><circle cx="18" cy="18" r="16.500" fill="#f6c92a" /><path d="M3.500 10A16.500 16.500 0 0 1 32.500 10H18A8 8 0 0 0 11 22Z" fill="#da4437" /><path d="M3.500 10A16.500 16.500 0 0 0 18 34.500L25 22A8 8 0 0 1 11 22Z" fill="#1fa15d" /><circle cx="18" cy="18" r="8" fill="#fff" /><circle cx="18" cy="18" r="6.300" fill="#4a86f0" /></I>],
  ["globe", false, <I><circle cx="18" cy="18" r="17" fill="#57e060" stroke="#b79cc8" strokeWidth="2" /><path d="M7 9L18 7L24 11L19 18L12 16ZM20 20L29 18L26 28L21 30ZM9 20L15 22L13 29ZM12 3L24 4L20 6H14Z" fill="#9868ae" /><path d="M1 18H35M18 1V35" stroke="#a990b8" /></I>],
  ["broomc", false, <I><path d="M33 9C27 0 12 0 9 12C6 24 14 36 25 34C29 33 32 31 33 28L27 23C22 28 16 25 16 18C16 11 22 9 27 14Z" fill="#cf3a22" /><path d="M20 4L15 16" stroke="#3a8ad0" strokeWidth="3" /><path d="M10 14L18 18L17 22L8 18Z" fill="#3a8ad0" /><path d="M7 18L17 22C16 28 14 31 12 33L0 27C3 24 5 22 7 18Z" fill="#f0c89a" /></I>],
  ["paint", false, <I><path d="M2 14C4 4 16 0 24 4C28 8 25 12 22 14C18 18 23 23 17 27C8 31 0 24 2 14Z" fill="#f0cfa0" stroke="#a8743c" /><circle cx="9" cy="9" r="2.500" fill="#d03020" /><circle cx="17" cy="6" r="2.500" fill="#3a70d0" /><circle cx="7" cy="16" r="2.500" fill="#f0a020" /><circle cx="22" cy="14" r="2.500" fill="#30a040" /><path d="M34 1L24 22L21 34L28 24Z" fill="#4a8ad8" /><path d="M24 24L20 34L26 27Z" fill="#b85a1a" /></I>],
  ["audio", false, <I><path d="M5 22C3 2 33 2 31 22" fill="none" stroke="#10108a" strokeWidth="2.500" /><rect x="3" y="19" width="5" height="11" rx="2.500" fill="#1414a0" /><rect x="28" y="19" width="5" height="11" rx="2.500" fill="#1414a0" /><path d="M8 21L10 17L12 18L14 14L16 17L18 14L20 17L23 14L25 18L27 17L29 22L27 32H10Z" fill="#ffd010" /><path d="M9 25L11 22L13 27L15 22L18 27L21 21L23 27L25 22L28 25" stroke="#f04010" strokeWidth="2.200" fill="none" /></I>],
  ["tower", true, <TowerIcon className="size-[36px]" />],
  ["sstv", false, <I><path d="M0 0H36V36H0Z" fill="#fff" stroke="#1010f0" strokeWidth="2" /><path d="M1 1H24V20H1Z" fill="#20e0f0" /><path d="M3 20V14L10 10L14 14L20 7L24 14V20Z" fill="#808010" /><circle cx="7" cy="6" r="3.500" fill="#f02020" /><path d="M24 1H35V20H24Z" fill="#111" /><path d="M26 5L34 3M26 9H34M26 13H34M26 17H34" stroke="#fff" strokeWidth="1.500" /><text x="2" y="32" fontFamily="Liberation Sans" fontSize="13.500" letterSpacing="0" fill="#2020f0" stroke="#2020f0" strokeWidth="0.400" textLength="32" lengthAdjust="spacingAndGlyphs">SSTV</text></I>],
  ["pdf", true, <I><path d="M3 28C2 16 8 10 16 9L6 12Z" fill="#777" /><path d="M5 28C5 16 11 8 34 6V28Z" fill="#f6e010" /><text x="9" y="24" fontFamily="Liberation Sans" fontSize="14" fontWeight="700" fill="#111" textLength="23" lengthAdjust="spacingAndGlyphs">PDF</text></I>],
  ["din", true, <Din />],
  ["pen", true, <I><path d="M3 33L8 22L16 12L18 20L9 29Z" fill="#e8d020" /><path d="M2 34L10 22L31 2L34 1L32 5L14 25Z" fill="#ddd" stroke="#333" /><path d="M12 22L28 6" stroke="#555" /><path d="M13 28L20 12" stroke="#e8d020" strokeWidth="2" /></I>],
  ["span", true, <SpanIcon className="h-[22px] w-[36px]" />],
  ["cmd", true, <I><path d="M1.500 4.500H34.500V31.500H1.500Z" fill="#000" stroke="#999" /><path d="M2 5H34V9H2Z" fill="#ddd" /><text x="4" y="18" fontFamily="Liberation Mono" fontSize="10" fontWeight="700" fill="#fff">C:\_</text></I>],
  ["red", true, <I><rect x="3" y="2" width="30" height="32" rx="2" fill="#a81010" stroke="#d08a30" strokeWidth="1.500" /><path d="M7 7H12V21H7ZM24 17H29V31H24Z" fill="#222" stroke="#555" /><path d="M12 10H15L22 26H25M12 18H15L21 21" fill="none" stroke="#e0a0a0" /></I>],
  ["swirl2", true, <Swirl />],
  ["scope", true, <I><defs><linearGradient id="sc" x1="0" x2="0" y1="0" y2="1"><stop offset="0" stopColor="#0a80e0" /><stop offset="1" stopColor="#04104e" /></linearGradient></defs><path d="M0 0H36V36H0Z" fill="url(#sc)" /><path d="M1 22C4 32 9 34 13 25C17 14 19 9 22 14C25 20 29 18 35 6M1 21C5 10 9 10 13 15C17 22 21 28 25 16C28 7 31 5 35 10" fill="none" stroke="#0a1020" strokeWidth="1.800" /></I>],
  ["firefox2", true, <Firefox />],
];

const TRAY = [
  <Swirl s={24} />,
  <Din s={23} />,
  <svg width="24" height="24" viewBox="0 0 24 24"><path d="M0 0H24V24H0Z" fill="#0a8a3a" /><path d="M7 3L18 12L7 21Z" fill="#d8f4e0" /><path d="M10 9L14 12L10 16Z" fill="#0a8a3a" /></svg>,
  <svg width="24" height="24" viewBox="0 0 24 24"><rect x="1" y="1" width="22" height="22" rx="3" fill="#bdbdbd" stroke="#eee" /><path d="M6 11H18V19H6Z" fill="#333" /><path d="M8 11V8C8 4 16 4 16 8V11" fill="none" stroke="#444" strokeWidth="2" /></svg>,
  <svg width="20" height="20" viewBox="0 0 20 20"><circle cx="10" cy="10" r="9.500" fill="#18b4f4" /><path d="M5 6H15L13 9H9V10H13L11 13H9L8 15Z" fill="#fff" /></svg>,
  <svg width="24" height="24" viewBox="0 0 24 24"><path d="M6 8H22V19H6Z" fill="#fff" stroke="#fff" /><path d="M1 4H7V8L5 10H3L1 8ZM2 1V4M6 1V4M4 10V17H7" fill="#111" stroke="#fff" strokeWidth="1.200" /></svg>,
  <svg width="24" height="24" viewBox="0 0 24 24" fill="none" stroke="#fff" strokeWidth="1.300"><path d="M2 21C2 11 10 3 20 3M6 21C6 13 12 7 20 7M10.500 21C10.500 16 14 12 20 12M15 21C15 19 17 17 20 17" /><path d="M18 19H20V21H18Z" fill="#fff" /></svg>,
  <svg width="24" height="24" viewBox="0 0 24 24" fill="none" stroke="#fff" strokeWidth="1.300"><path d="M1.500 8.500H5L10 3V21L5 15.500H1.500ZM13 9C14.500 11 14.500 13 13 15M16 7C18.500 10 18.500 14 16 17M19 4.500C23 9 23 15 19 19.500" /></svg>,
  <svg width="25" height="25" viewBox="0 0 25 25" fill="none" stroke="#fff" strokeWidth="1.400"><path d="M12 19.500H1.500V1.500H23.500V13M5 6.500H19M5 10.500H19M5 14.500H13" /><circle cx="18" cy="18.500" r="5.500" /><path d="M15 18.500H21" /></svg>,
];

const taskCell = (i) => {
  if (i < 3) return "w-[72px]";
  if (i === 3) return "ml-[2px] w-[67px]";
  return i < 18 ? "w-[67px]" : "w-[66.200px]";
};

function Taskbar() {
  return (
    <div className="flex h-[60px] bg-linear-to-r from-[#1b1716] via-[#171312] to-[#15161a] font-['Open_Sans'] text-white [font-stretch:normal]">
      {TASKS.map(([name, open, icon], i) => (
        <div key={name} className={`flex shrink-0 flex-col items-center justify-end ${taskCell(i)} ${name === "span" ? "border-r-4 border-[#454241] bg-[#5d5a59]" : ""}`}>
          <div className="flex h-[36px] items-center">{icon}</div>
          <div className={`mt-[9px] h-[3px] ${open ? "bg-[#fdcbb2]" : ""} ${name === "span" ? "w-full" : "w-[53px]"}`} />
        </div>
      ))}
      <div className="ml-[2px] flex shrink-0 items-center">
        {TRAY.map((icon, i) => (
          <div key={i} className="flex w-[48px] justify-center">{icon}</div>
        ))}
        <svg width="34" height="20" viewBox="0 0 34 20" className="ml-[14px]" fill="none" stroke="#fff" strokeWidth="1.200">
          <path d="M1 1H33V19H1Z" /><path d="M4 6H30M4 10H30" strokeDasharray="2 2" /><path d="M4 14.500H7M10 14.500H24M27 14.500H30" />
        </svg>
      </div>
      <div className="ml-auto flex w-[88px] flex-col items-center pt-[4px] text-[17.500px] leading-[25px] tracking-[0.100px] whitespace-nowrap">
        <div className="tracking-[-0.300px]">14:43</div>
        <div>23-7-2016</div>
      </div>
      <div className="ml-[8px] w-[8px] border-l border-[#6a6a6a]" />
    </div>
  );
}

export default function App() {
  return (
    <div className="relative h-[1440px] w-[2160px] overflow-hidden bg-[#eeeeee] font-['DejaVu_Sans_Condensed','DejaVu_Sans',sans-serif] text-[16.500px] leading-none tracking-[-0.200px] text-[#1a1a22] [font-stretch:condensed]">
      <TitleBar />
      <MenuRow />
      <div className="flex h-[8px] items-center"><div className="h-[2px] w-full bg-[#a2a2a2]" /></div>
      <LogRow />
      <div className="h-[4px] border-b-2 border-[#c4c4c4] bg-[#eeeeee]" />
      <RxArea />
      <WefaxPanel />
      <MacroBar />
      <WaterfallBlock />
      <StatusRow />
      <Taskbar />
      <div className="absolute top-[228px] left-[1549px] size-[36px] rounded-full border border-[#ececec]" />
      <SpanWindow />
    </div>
  );
}
